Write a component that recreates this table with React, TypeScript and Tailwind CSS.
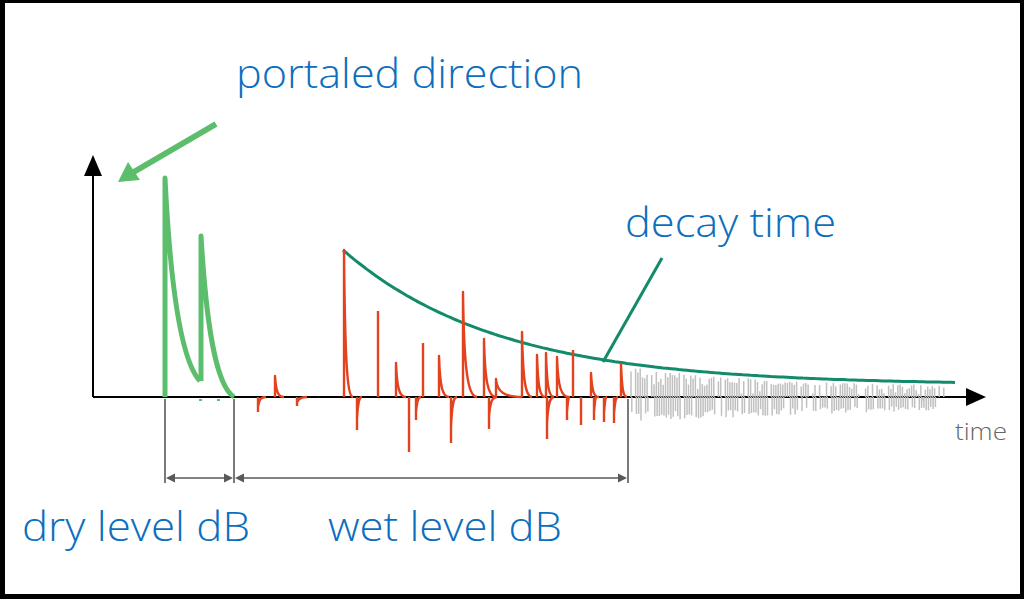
import React from "react";

const AXIS_Y = 397;

// upward reflections: x, top, tail length
const upSpikes: [number, number, number][] = [
  [275, 376, 9],
  [344, 250, 9],
  [378, 311, 0],
  [396, 363, 10],
  [423, 343, 0],
  [439, 356, 10],
  [463, 292, 14],
  [484, 339, 12],
  [496, 379, 26],
  [522, 332, 10],
  [537, 355, 8],
  [546, 353, 8],
  [557, 357, 12],
  [573, 350, 0],
  [591, 373, 8],
  [621, 364, 6],
];

// downward reflections: x, bottom, tail length
const downSpikes: [number, number, number][] = [
  [258, 412, 8],
  [297, 406, 10],
  [357, 430, 5],
  [409, 452, 0],
  [416, 420, 5],
  [451, 443, 6],
  [489, 429, 8],
  [547, 439, 7],
  [567, 420, 3],
  [581, 425, 0],
  [594, 420, 3],
  [604, 422, 3],
  [614, 423, 4],
];

const envelope = (x: number) => AXIS_Y - (12 + 135 * Math.exp(-(x - 343) / 155));

function upPath([x, top, len]: [number, number, number]) {
  if (!len) return `M${x},${AXIS_Y} L${x},${top}`;
  const h = AXIS_Y - top;
  return `M${x},${AXIS_Y} L${x},${top} C${x + 1},${top + h * 0.75} ${x + len * 0.35},${AXIS_Y} ${x + len},${AXIS_Y}`;
}

function downPath([x, bottom, len]: [number, number, number]) {
  if (!len) return `M${x},${AXIS_Y} L${x},${bottom}`;
  const h = bottom - AXIS_Y;
  return `M${x},${AXIS_Y} L${x},${bottom} M${x},${bottom - h * 0.35} C${x + 1},${bottom - h * 0.85} ${x + len * 0.4},${AXIS_Y} ${x + len},${AXIS_Y}`;
}

// late diffuse tail, seeded so it's stable
function noiseLines() {
  let s = 98765;
  const rnd = () => {
    s = (s * 1103515245 + 12345) % 2147483648;
    return s / 2147483648;
  };
  const out: { x: number; y1: number; y2: number }[] = [];
  for (let x = 631; x < 944; x += 2.3) {
    if (rnd() < 0.12) continue;
    const t = (x - 631) / 313;
    const top = envelope(x) + 3 + (rnd() < 0.2 ? 8 + rnd() * 8 : rnd() * 6);
    out.push({ x, y1: AXIS_Y, y2: top });
    if (x < 936 && rnd() > 0.1) {
      const depth = (24 - t * 11) * (0.6 + rnd() * 0.4);
      out.push({ x: x + 0.8, y1: AXIS_Y, y2: AXIS_Y + depth });
    }
  }
  return out;
}

const font = "'Open Sans', 'Noto Sans', sans-serif";

export default function App() {
  const noise = noiseLines();
  const env: string[] = [];
  for (let x = 343; x <= 957; x += 4) env.push(`${x},${envelope(x).toFixed(1)}`);

  return (
    <div className="w-[1024px] h-[599px] bg-white border-black border-t-[3px] border-l-[5px] border-r-[4px] border-b-[5px]">
      <svg width="1015" height="591" viewBox="5 3 1015 591" className="block">
        {/* axes */}
        <line x1="93" y1="172" x2="93" y2={AXIS_Y} stroke="#000" strokeWidth="2" />
        <polygon points="93,155 84,176 102,176" fill="#000" />
        <line x1="93" y1={AXIS_Y} x2="968" y2={AXIS_Y} stroke="#000" strokeWidth="2" />
        <polygon points="986,397 966,388 966,406" fill="#000" />

        {/* diffuse tail */}
        {noise.map((n, i) => (
          <line key={i} x1={n.x} y1={n.y1} x2={n.x} y2={n.y2} stroke="#c0c0c0" strokeWidth="1.5" />
        ))}

        {/* decay envelope */}
        <polyline points={env.join(" ")} fill="none" stroke="#138a6a" strokeWidth="3" />
        <line x1="662" y1="258" x2="603" y2="362" stroke="#138a6a" strokeWidth="3" />

        {/* wet reflections */}
        <g fill="none" stroke="#e2431e" strokeWidth="2.4" strokeLinejoin="round">
          {upSpikes.map((s, i) => (
            <path key={"u" + i} d={upPath(s)} />
          ))}
          {downSpikes.map((s, i) => (
            <path key={"d" + i} d={downPath(s)} />
          ))}
        </g>

        {/* dry signal */}
        <g fill="none" stroke="#5cbd6c" strokeWidth="5" strokeLinejoin="round">
          <path d="M165,397 L165,178 C170,280 180,360 200,381" />
          <path d="M201,381 L201,236 C206,320 215,385 234,397" />
        </g>
        <line x1="199" y1="400" x2="202" y2="400" stroke="#5cbd6c" strokeWidth="2" />
        <line x1="217" y1="400" x2="220" y2="400" stroke="#5cbd6c" strokeWidth="2" />

        {/* portaled direction arrow */}
        <line x1="216" y1="124" x2="132" y2="173" stroke="#5cbd6c" strokeWidth="6" />
        <polygon points="118,182 128,162 140,180" fill="#5cbd6c" />

        {/* dimension lines */}
        <g stroke="#595959" strokeWidth="1.6">
          <line x1="165" y1="399" x2="165" y2="483" />
          <line x1="234" y1="399" x2="234" y2="483" />
          <line x1="628" y1="399" x2="628" y2="483" />
          <line x1="168" y1="478" x2="231" y2="478" />
          <line x1="237" y1="478" x2="625" y2="478" />
        </g>
        <g fill="#595959">
          <polygon points="166,478 175,473.5 175,482.5" />
          <polygon points="233,478 224,473.5 224,482.5" />
          <polygon points="235,478 244,473.5 244,482.5" />
          <polygon points="627,478 618,473.5 618,482.5" />
        </g>

        {/* labels */}
        <g fill="#0b6ec0" fontFamily={font} fontSize="40" fontWeight="300">
          <text x="236" y="88" textLength="347" lengthAdjust="spacingAndGlyphs">portaled direction</text>
          <text x="625" y="237" textLength="211" lengthAdjust="spacingAndGlyphs">decay time</text>
          <text x="22" y="541" textLength="228" lengthAdjust="spacingAndGlyphs">dry level dB</text>
          <text x="328" y="541" textLength="234" lengthAdjust="spacingAndGlyphs">wet level dB</text>
        </g>
        <text x="955" y="440" fill="#666666" fontFamily={font} fontSize="24" fontWeight="300" textLength="52" lengthAdjust="spacingAndGlyphs">
          time
        </text>
      </svg>
    </div>
  );
}
